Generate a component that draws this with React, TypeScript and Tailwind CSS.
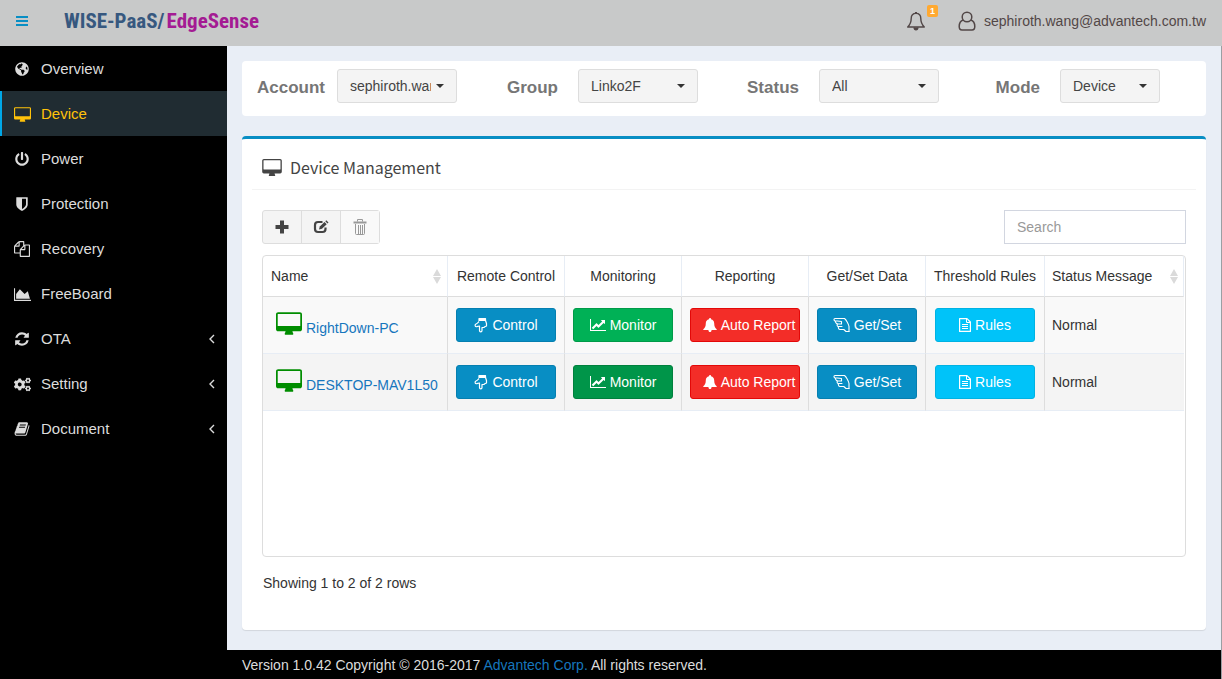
import React, { ReactNode } from 'react';
import { FaCogs, FaGlobeAmericas, FaPowerOff } from 'react-icons/fa';

interface GlyphProps {
  d: string;
  viewBox?: string;
  className?: string;
}

const Glyph: React.FC<GlyphProps> = ({ d, viewBox = '0 0 1792 1792', className }) => (
  <svg viewBox={viewBox} className={className} fill="currentColor" aria-hidden="true">
    <path d={d} />
  </svg>
);

const DESKTOP =
  'M1728 992v-832q0-13-9.5-22.5t-22.5-9.5h-1600q-13 0-22.5 9.5t-9.5 22.5v832q0 13 9.5 22.5t22.5 9.5h1600q13 0 22.5-9.5t9.5-22.5zm128-832v1088q0 66-47 113t-113 47h-544q0 37 16 77.5t32 71 16 43.5q0 26-19 45t-45 19h-512q-26 0-45-19t-19-45q0-14 16-44t32-70 16-78h-544q-66 0-113-47t-47-113v-1088q0-66 47-113t113-47h1600q66 0 113 47t47 113z';
const SHIELD =
  'M1344 960v-640h-448v1137q119-63 213-137 235-184 235-360zm192-768v768q0 86-33.5 170.5t-83 150-118 127.5-126.5 103-121 77.5-89.5 49.5-42.5 20q-12 6-26 6t-26-6q-16-7-42.5-20t-89.5-49.5-121-77.5-126.5-103-118-127.5-83-150-33.5-170.5v-768q0-26 19-45t45-19h1152q26 0 45 19t19 45z';
const FILES =
  'M1696 384q40 0 68 28t28 68v1216q0 40-28 68t-68 28h-960q-40 0-68-28t-28-68v-288h-544q-40 0-68-28t-28-68v-672q0-40 20-88t48-76l408-408q28-28 76-48t88-20h416q40 0 68 28t28 68v328q68-40 128-40h416zm-544 213l-299 299h299v-299zm-640-384l-299 299h299v-299zm196 647l316-316v-416h-384v416q0 40-28 68t-68 28h-416v640h512v-256q0-40 20-88t48-76zm956 804v-1152h-384v416q0 40-28 68t-68 28h-416v640h896z';
const AREA_CHART = 'M2048 1536v128h-2048v-1536h128v1408h1920zm-384-1024l256 896h-1664v-576l448-576 576 576z';
const LINE_CHART =
  'M2048 1536v128h-2048v-1536h128v1408h1920zm-128-1248v435q0 21-19.5 29.5t-35.5-7.5l-121-121-633 633q-10 10-23 10t-23-10l-233-233-416 416-192-192 585-585q10-10 23-10t23 10l233 233 464-464-121-121q-16-16-7.5-35.5t29.5-19.5h435q14 0 23 9t9 23z';
const REFRESH =
  'M1639 1056q0 5-1 7-64 268-268 434.5t-478 166.5q-146 0-282.5-55t-243.5-157l-129 129q-19 19-45 19t-45-19-19-45v-448q0-26 19-45t45-19h448q26 0 45 19t19 45-19 45l-137 137q71 66 161 102t187 36q134 0 250-65t186-179q11-17 53-117 8-23 30-23h192q13 0 22.5 9.5t9.5 22.5zm25-800v448q0 26-19 45t-45 19h-448q-26 0-45-19t-19-45 19-45l138-138q-148-137-349-137-134 0-250 65t-186 179q-11 17-53 117-8 23-30 23h-199q-13 0-22.5-9.5t-9.5-22.5v-7q65-268 270-434.5t480-166.5q146 0 284 55.5t245 156.5l130-129q19-19 45-19t45 19 19 45z';
const BOOK =
  'M1703 478q40 57 18 129l-275 906q-19 64-76.5 107.5t-122.5 43.5h-923q-77 0-148.5-53.5t-99.5-131.5q-24-67-2-127 0-4 3-27t4-37q1-8-3-21.5t-3-19.5q2-11 8-21t16.5-23.5 16.5-23.5q23-38 45-91.5t30-91.5q3-10 .5-30t-.5-28q3-11 17-28t17-23q21-36 42-92t25-90q1-9-2.5-32t.5-28q4-13 22-30.5t22-22.5q19-26 42.5-84.5t27.5-96.5q1-8-3-25.5t-2-26.5q2-8 9-18t18-23 17-21q8-12 16.5-30.5t15-35 16-36 19.5-32 26.5-23.5 36-11.5 47.5 5.5l-1 3q38-9 51-9h761q74 0 114 56t18 130l-274 906q-36 119-71.5 153.5t-128.5 34.5h-869q-27 0-38 15-11 16-1 43 24 70 144 70h923q29 0 56-15.5t35-41.5l300-987q7-22 5-57 38 15 59 43zm-1064 2q-4 13 2 22.5t20 9.5h608q13 0 25.5-9.5t16.5-22.5l21-64q4-13-2-22.5t-20-9.5h-608q-13 0-25.5 9.5t-16.5 22.5zm-83 256q-4 13 2 22.5t20 9.5h608q13 0 25.5-9.5t16.5-22.5l21-64q4-13-2-22.5t-20-9.5h-608q-13 0-25.5 9.5t-16.5 22.5z';

const DesktopIcon = ({ className }: { className: string }) => (
  <Glyph d={DESKTOP} viewBox="-64 0 1920 1664" className={className} />
);

const HandDownIcon = () => (
  <svg viewBox="0 0 14 16" className="h-4 w-[14px]" fill="none" stroke="currentColor" strokeWidth="1.2" strokeLinejoin="round" aria-hidden="true">
    <path d="M5 1.500h6.500v2H5z" fill="currentColor" />
    <path d="M5 4.500C4 5.500 3.200 6.500 2 7c-1.600.8-1 3 .8 2.700L5.500 9v4.500c0 1.700 2.500 1.700 2.500 0V10.500h2l.8-.8 1.700-.7V6.500L11.500 3.500" />
  </svg>
);

const HandScissorsIcon = () => (
  <svg viewBox="0 0 17 16" className="h-4 w-[17px]" fill="none" stroke="currentColor" strokeWidth="1.1" strokeLinejoin="round" strokeLinecap="round" aria-hidden="true">
    <path d="M16 14.500V9.500C15.600 7 13 2.500 11.500 1.500H2C.6 1.500.6 3.500 2 3.800l6.500.7V7H4.500C3 7 2.800 5.500 2 4" />
    <path d="M4.500 7c-.8 1-.3 2.500.8 2.500h3.700M5.500 9.500c-.5 1.500.2 3 1.500 3h3.800l2.200 2h3" />
  </svg>
);

const FileTextIcon = () => (
  <svg viewBox="0 0 12 14" className="h-[14px] w-3" fill="none" stroke="currentColor" aria-hidden="true">
    <path d="M.6.6H8L11.400 4v9.400H.6z" strokeWidth="1.2" strokeLinejoin="round" />
    <path d="M7.500.6v3.900h3.900M3 6.500h6M3 8.500h6M3 10.500h6" />
  </svg>
);

const BellSolidIcon = () => (
  <svg viewBox="0 0 14 14" className="size-[14px]" fill="currentColor" aria-hidden="true">
    <path d="M7 0c.6 0 1 .4 1 .9v.4c2 .4 3.200 2 3.200 4 0 3.500 1 4.700 2.500 6v.6H.3v-.6c1.500-1.300 2.500-2.500 2.500-6 0-2 1.200-3.600 3.200-4V.9C6 .4 6.400 0 7 0zM5.400 11.700h3.200c0 1.400-.7 2.300-1.600 2.300s-1.600-.9-1.600-2.300z" />
  </svg>
);

const PlusIcon = () => (
  <svg viewBox="0 0 14 14" className="size-[14px]" fill="currentColor" aria-hidden="true">
    <path d="M5 .5h4V5h4.500v4H9v4.500H5V9H.5V5H5z" />
  </svg>
);

const EditIcon = () => (
  <svg viewBox="0 0 16 14" className="h-[14px] w-4" fill="none" stroke="currentColor" aria-hidden="true">
    <path d="M9.500 2H5Q2 2 2 5v4Q2 12 5 12h4.500Q12.500 12 12.500 9V7.500" strokeWidth="2.2" />
    <path d="M6 9.500l.8-3L11.500 2 13.700 4.200 9 8.800z" fill="currentColor" stroke="none" />
    <path d="M12.300 1.200l1-1 2.200 2.200-1 1z" fill="currentColor" stroke="none" />
  </svg>
);

const TrashIcon = () => (
  <svg viewBox="0 0 14 16" className="h-4 w-[14px]" fill="none" stroke="currentColor" aria-hidden="true">
    <path d="M4.500 2.500V.5h5v2" />
    <path d="M.5 3.500h13" strokeWidth="2" />
    <path d="M2.500 5v9.500q0 1 1 1h7q1 0 1-1V5M5.500 6v9M7.500 6v9M9.500 6v9" />
  </svg>
);

const BellIcon = () => (
  <svg viewBox="0 0 20 20" className="size-5" fill="none" stroke="currentColor" strokeWidth="1.4" strokeLinejoin="round" aria-hidden="true">
    <path d="M10 2.400c-3.300 0-4.800 2.300-4.800 5.200 0 4.500-1.300 6.300-3.500 8.400h16.600c-2.200-2.100-3.500-3.900-3.500-8.400 0-2.900-1.500-5.200-4.800-5.200z" />
    <path d="M10 2.400V1" strokeWidth="2" />
    <path d="M8 16.500c.2 1.500 1 2.300 2 2.300s1.800-.8 2-2.300" fill="currentColor" />
  </svg>
);

const UserIcon = () => (
  <svg viewBox="0 0 18 20" className="h-5 w-[18px]" fill="none" stroke="currentColor" strokeWidth="1.5" aria-hidden="true">
    <circle cx="9" cy="6" r="4.800" />
    <path d="M5.200 9C2.500 9.800 1.200 12.500 1.200 15.500c0 2 1 3.500 2.800 3.500h10c1.800 0 2.800-1.500 2.800-3.500 0-3-1.300-5.700-4-6.500" />
  </svg>
);

const SortIcon = () => (
  <svg viewBox="0 0 8 15" className="-mr-[2px] h-[15px] w-2 text-[#dadada]" fill="currentColor" aria-hidden="true">
    <path d="M4 0l4 7H0zM0 8h8l-4 7z" />
  </svg>
);

interface MenuItem {
  label: string;
  icon: ReactNode;
  active?: boolean;
  children?: boolean;
}

const menu: MenuItem[] = [
  { label: 'Overview', icon: <FaGlobeAmericas size={14} /> },
  { label: 'Device', icon: <DesktopIcon className="h-[15px] w-[17px]" />, active: true },
  { label: 'Power', icon: <FaPowerOff size={14} /> },
  { label: 'Protection', icon: <Glyph d={SHIELD} className="size-4" /> },
  { label: 'Recovery', icon: <Glyph d={FILES} className="size-4" /> },
  { label: 'FreeBoard', icon: <Glyph d={AREA_CHART} viewBox="0 0 2048 1792" className="h-[15px] w-[17px]" /> },
  { label: 'OTA', icon: <Glyph d={REFRESH} className="size-4" />, children: true },
  { label: 'Setting', icon: <FaCogs size={17} />, children: true },
  { label: 'Document', icon: <Glyph d={BOOK} className="size-4" />, children: true },
];

const filters = [
  { id: 'account', label: 'Account', value: 'sephiroth.wang@advantech.com.tw', width: 'w-[120px]' },
  { id: 'group', label: 'Group', value: 'Linko2F', width: 'w-[120px]' },
  { id: 'status', label: 'Status', value: 'All', width: 'w-[120px]' },
  { id: 'mode', label: 'Mode', value: 'Device', width: 'w-[100px]' },
];

const devices = [
  { name: 'RightDown-PC', status: 'Normal', row: 'bg-[#f9f9f9]', monitor: 'bg-[#00b156] border-[#009a48]' },
  { name: 'DESKTOP-MAV1L50', status: 'Normal', row: 'bg-[#f4f4f4]', monitor: 'bg-[#009549] border-[#00803d]' },
];

const ActionButton: React.FC<{ className: string; icon: ReactNode; children: ReactNode }> = ({
  className,
  icon,
  children,
}) => (
  <button
    type="button"
    className={`flex h-[34px] w-full items-center justify-center gap-1 rounded-[3px] border text-sm whitespace-nowrap text-white ${className}`}
  >
    {icon}
    {children}
  </button>
);

const Header = () => (
  <header className="flex h-[46px] items-center justify-between bg-[#c8c9c9] px-4 pb-1">
    <div className="flex items-center gap-9">
      <button type="button" aria-label="Toggle menu" className="text-[#088ec4]">
        <svg viewBox="0 0 12 12" className="size-3" fill="currentColor" aria-hidden="true">
          <path d="M0 1h12v2H0zM0 5h12v2H0zM0 9h12v2H0z" />
        </svg>
      </button>
      <h1 className="flex gap-[2px] font-['Roboto_Condensed','Liberation_Sans_Narrow',sans-serif] text-[21px] leading-7 font-bold whitespace-nowrap text-[#37587f]">
        <span>WISE-PaaS/</span>
        <span className="text-[#a41b93]">EdgeSense</span>
      </h1>
    </div>
    <div className="flex items-center gap-8 text-[#524747]">
      <button type="button" aria-label="Notifications" className="relative">
        <BellIcon />
        <span className="absolute -top-[6px] left-[21px] rounded-xs bg-[#ffa931] px-[3px] text-[9px] leading-3 font-bold text-white">
          1
        </span>
      </button>
      <a href="#profile" className="flex items-center gap-2 text-sm">
        <UserIcon />
        sephiroth.wang@advantech.com.tw
      </a>
    </div>
  </header>
);

const Sidebar = () => (
  <nav className="w-[227px] shrink-0 bg-black">
    <ul>
      {menu.map((item) => (
        <li key={item.label}>
          <a
            href={`#${item.label.toLowerCase()}`}
            className={`flex h-[45px] items-center border-l-2 pt-px pr-3 pl-[10px] text-[15px] ${
              item.active ? 'border-[#00a7e6] bg-[#202c32] text-[#ffc20a]' : 'border-transparent text-[#dcdcdc]'
            }`}
          >
            <span className="flex w-5 justify-center">{item.icon}</span>
            <span className="ml-[9px] flex-1">{item.label}</span>
            {item.children && (
              <svg viewBox="0 0 6 10" className="h-[10px] w-[6px]" fill="none" stroke="currentColor" strokeWidth="1.4" aria-hidden="true">
                <path d="M5 1L1 5l4 4" />
              </svg>
            )}
          </a>
        </li>
      ))}
    </ul>
  </nav>
);

const Filters = () => (
  <section className="grid grid-cols-4 rounded bg-white pt-2 pb-[13px]">
    {filters.map((f) => (
      <div key={f.id} className="flex items-center gap-5 pl-[15px]">
        <label htmlFor={f.id} className="w-[60px] pt-1 text-right text-[17px] font-bold text-[#767676]">
          {f.label}
        </label>
        <div className={`relative ${f.width}`}>
          <select
            id={f.id}
            className="h-[34px] w-full appearance-none rounded-[3px] border border-[#dddddd] bg-[#f4f4f4] pr-[25px] pl-3 text-sm text-[#444444]"
          >
            <option>{f.value}</option>
          </select>
          <svg viewBox="0 0 8 4" className="pointer-events-none absolute top-[15px] right-[13px] h-1 w-2 text-[#333333]" fill="currentColor" aria-hidden="true">
            <path d="M0 0h8L4 4z" />
          </svg>
        </div>
      </div>
    ))}
  </section>
);

const cell = 'border-r border-b border-r-[#dddddd] border-b-[#e7edf5] px-2';
const head = 'h-[41px] border-r border-b border-r-[#e7edf5] border-b-[#dddddd] font-normal whitespace-nowrap';

const DeviceTable = () => (
  <div className="h-[302px] rounded border border-[#dddddd] pr-px">
    <table className="w-full table-fixed border-separate border-spacing-0 text-sm text-[#333333]">
      <colgroup>
        <col className="w-[185px]" />
        <col className="w-[117px]" />
        <col className="w-[117px]" />
        <col className="w-[127px]" />
        <col className="w-[117px]" />
        <col className="w-[119px]" />
        <col />
      </colgroup>
      <thead>
        <tr>
          <th className={`${head} px-2`}>
            <div className="flex items-center justify-between">
              Name
              <SortIcon />
            </div>
          </th>
          <th className={head}>Remote Control</th>
          <th className={head}>Monitoring</th>
          <th className={head}>Reporting</th>
          <th className={head}>Get/Set Data</th>
          <th className={head}>Threshold Rules</th>
          <th className={`${head} px-[7px]`}>
            <div className="flex items-center justify-between">
              Status Message
              <SortIcon />
            </div>
          </th>
        </tr>
      </thead>
      <tbody>
        {devices.map((d) => (
          <tr key={d.name} className={`h-[57px] ${d.row}`}>
            <td className={cell}>
              <a href="#device" className="flex items-start gap-1 pl-[5px] whitespace-nowrap text-[#1676bd]">
                <DesktopIcon className="h-[23px] w-[26px] shrink-0 text-[#008d00]" />
                <span className="pt-[6px]">{d.name}</span>
              </a>
            </td>
            <td className={cell}>
              <ActionButton className="border-[#057fb0] bg-[#088ec4]" icon={<HandDownIcon />}>
                Control
              </ActionButton>
            </td>
            <td className={cell}>
              <ActionButton className={d.monitor} icon={<Glyph d={LINE_CHART} viewBox="0 0 2048 1792" className="h-[14px] w-4" />}>
                Monitor
              </ActionButton>
            </td>
            <td className={cell}>
              <ActionButton className="border-[#e30808] bg-[#f32d28] pl-2" icon={<BellSolidIcon />}>
                Auto Report
              </ActionButton>
            </td>
            <td className={cell}>
              <ActionButton className="border-[#057fb0] bg-[#088ec4]" icon={<HandScissorsIcon />}>
                Get/Set
              </ActionButton>
            </td>
            <td className={`${cell} px-[9px]`}>
              <ActionButton className="border-[#00b2e2] bg-[#00c3f9]" icon={<FileTextIcon />}>
                Rules
              </ActionButton>
            </td>
            <td className="border-b border-[#e7edf5] px-[7px]">{d.status}</td>
          </tr>
        ))}
      </tbody>
    </table>
  </div>
);

const Toolbar = () => (
  <div className="flex items-end justify-between pt-5 pb-[11px]">
    <div className="flex h-[34px] rounded-[3px] border border-[#dddddd] bg-[#f4f4f4] text-[#444444]">
      <button type="button" aria-label="Add device" className="flex w-[38px] items-center justify-center">
        <PlusIcon />
      </button>
      <button type="button" aria-label="Edit device" className="flex w-10 items-center justify-center border-x border-[#dddddd]">
        <EditIcon />
      </button>
      <button type="button" aria-label="Delete device" disabled className="flex w-[38px] items-center justify-center bg-[#f9f9f9] text-[#999999]">
        <TrashIcon />
      </button>
    </div>
    <input
      type="text"
      aria-label="Search"
      placeholder="Search"
      className="h-[34px] w-[182px] border border-[#d2d6e0] px-3 text-sm placeholder:text-[#999999]"
    />
  </div>
);

const App: React.FC = () => {
  return (
    <div className="flex min-h-screen flex-col font-['Liberation_Sans',Arial,sans-serif]">
      <Header />
      <div className="flex flex-1">
        <Sidebar />
        <div className="flex min-w-0 flex-1 flex-col border-r border-[#9b9fa3] bg-[#e9eef6]">
          <main className="flex flex-1 flex-col gap-5 px-[15px] pt-[15px] pb-5">
            <Filters />
            <section className="flex-1 rounded border-t-3 border-t-[#088ec4] bg-white px-[10px] shadow-[0_1px_1px_rgba(0,0,0,0.1)]">
              <h2 className="flex items-center gap-2 border-b border-[#f3f3f3] px-[10px] pt-4 pb-[10px] font-['Noto_Sans_CJK_SC',sans-serif] text-base leading-6 text-[#444444]">
                <DesktopIcon className="h-[17px] w-5" />
                Device Management
              </h2>
              <div className="px-[10px]">
                <Toolbar />
                <DeviceTable />
                <p className="pt-4 pl-px text-sm text-[#333333]">Showing 1 to 2 of 2 rows</p>
              </div>
            </section>
          </main>
          <footer className="bg-black px-[15px] pt-[5px] pb-1 text-sm text-[#dcdcdc]">
            Version 1.0.42 Copyright © 2016-2017{' '}
            <a href="#advantech" className="text-[#1676bd]">
              Advantech Corp.
            </a>{' '}
            All rights reserved.
          </footer>
        </div>
      </div>
    </div>
  );
};

export default App;
